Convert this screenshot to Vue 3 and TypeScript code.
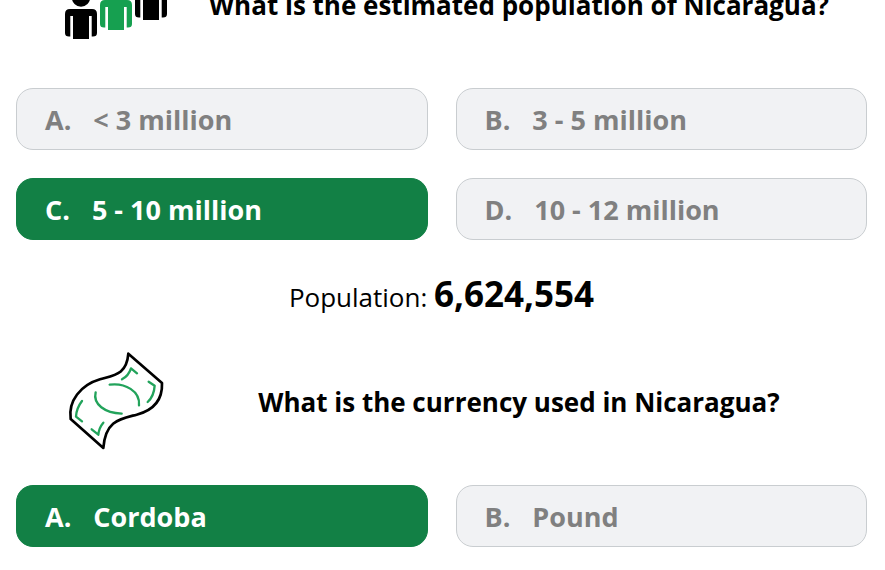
<script setup lang="ts">
import { ref } from 'vue'

interface Option {
  letter: string
  text: string
}

interface Question {
  id: string
  title: string
  options: Option[]
  note?: { label: string; value: string }
}

const questions: Question[] = [
  {
    id: 'population',
    title: 'What is the estimated population of Nicaragua?',
    options: [
      { letter: 'A.', text: '< 3 million' },
      { letter: 'B.', text: '3 - 5 million' },
      { letter: 'C.', text: '5 - 10 million' },
      { letter: 'D.', text: '10 - 12 million' },
    ],
    note: { label: 'Population:', value: '6,624,554' },
  },
  {
    id: 'currency',
    title: 'What is the currency used in Nicaragua?',
    options: [
      { letter: 'A.', text: 'Cordoba' },
      { letter: 'B.', text: 'Pound' },
    ],
  },
]

const selected = ref<Record<string, string>>({ population: 'C.', currency: 'A.' })

const people = [
  { x: 65, y: 9, color: '#000' },
  { x: 100, y: 0, color: '#16a050' },
  { x: 135, y: -10, color: '#000' },
]
</script>

<template>
  <main class="quiz">
    <section v-for="q in questions" :key="q.id">
      <header class="question">
        <svg v-if="q.id === 'population'" class="icon" viewBox="64 -46 107 100" aria-hidden="true">
          <g v-for="p in people" :key="p.x" :transform="`translate(${p.x} ${p.y})`" :fill="p.color">
            <circle cx="16" cy="-11.5" r="9.2" />
            <path d="M5 0H27Q32 0 32 5V24Q32 27.5 28 27.5H26.7V7H24V30H8V7H5.3V27.5H4Q0 27.5 0 24V5Q0 0 5 0Z" />
          </g>
        </svg>
        <svg v-else class="icon" viewBox="12 30 321 300" fill="none" stroke-linecap="round" stroke-linejoin="round" aria-hidden="true">
          <path
            d="M205 38L306 126C308 180 280 208 230 221C180 234 136 238 130 321L32 234C24 180 62 132 120 115C165 102 200 100 205 38Z"
            stroke="#000" stroke-width="8"
          />
          <g stroke="#22a35b" stroke-width="7">
            <path d="M149 131C195 125 241 150 237 193" />
            <path d="M107 154C98 190 135 216 185 218" />
            <path d="M186 115Q206 104 213 82L231 97" />
            <path d="M266 122L284 134Q282 166 263 183" />
            <path d="M66 180Q49 202 48 227L66 241" />
            <path d="M95 265L115 281Q117 260 130 245" />
          </g>
        </svg>
        <h2>{{ q.title }}</h2>
      </header>

      <div class="options">
        <button
          v-for="o in q.options"
          :key="o.letter"
          type="button"
          class="option"
          :class="{ chosen: selected[q.id] === o.letter }"
          :aria-pressed="selected[q.id] === o.letter"
          @click="selected[q.id] = o.letter"
        >
          <span>{{ o.letter }}</span>
          <span>{{ o.text }}</span>
        </button>
      </div>

      <p v-if="q.note" class="note">
        {{ q.note.label }} <strong>{{ q.note.value }}</strong>
      </p>
    </section>
  </main>
</template>

<style>
body {
  background: #fff;
  overflow: hidden;
}
</style>

<style scoped>
.quiz {
  margin-top: -46px;
  padding: 0 18px 0 16px;
  color: #000;
  font-family: 'Open Sans', 'Noto Sans', sans-serif;
}

.question {
  display: flex;
  align-items: center;
  padding-left: 48px;
  margin-bottom: 34px;
}

.icon {
  flex: none;
  width: 107px;
  height: 100px;
}

h2 {
  flex: 1;
  margin: 0;
  padding-top: 2px;
  text-align: center;
  font-size: 26px;
  font-weight: 700;
  line-height: 36px;
}

.options {
  display: grid;
  grid-template-columns: 1fr 1fr;
  gap: 28px;
}

.option {
  display: flex;
  align-items: center;
  gap: 22px;
  height: 62px;
  padding: 0 28px;
  border: 1px solid #c9cdd0;
  border-radius: 17px;
  background: #f1f2f4;
  color: #808080;
  font: inherit;
  font-size: 27px;
  font-weight: 700;
  text-align: left;
  cursor: pointer;
}

.option.chosen {
  border-color: #128045;
  background: #128045;
  color: #fff;
}

.note {
  margin: 0;
  text-align: center;
  font-size: 26px;
  font-weight: 400;
  line-height: 107px;
}

.note strong {
  font-size: 35px;
  font-weight: 700;
}
</style>
